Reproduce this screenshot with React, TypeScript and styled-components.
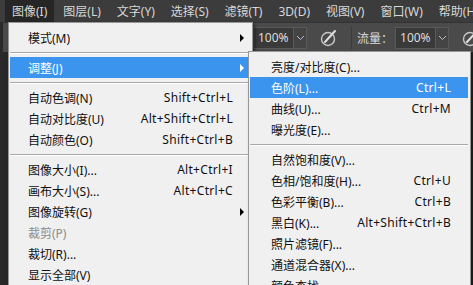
import styled, { createGlobalStyle } from 'styled-components';

const GlobalStyle = createGlobalStyle`
  html, body {
    margin: 0;
    padding: 0;
    background: #2b2b2b;
  }
  * {
    box-sizing: border-box;
  }
`;

const menuBarItems = ['图像(I)', '图层(L)', '文字(Y)', '选择(S)', '滤镜(T)', '3D(D)', '视图(V)', '窗口(W)', '帮助(H)'];

type Entry =
  | { sep: true }
  | { label: string; shortcut?: string; sub?: boolean; active?: boolean; disabled?: boolean; sep?: false };

const imageMenu: Entry[] = [
  { label: '模式(M)', sub: true },
  { sep: true },
  { label: '调整(J)', sub: true, active: true },
  { sep: true },
  { label: '自动色调(N)', shortcut: 'Shift+Ctrl+L' },
  { label: '自动对比度(U)', shortcut: 'Alt+Shift+Ctrl+L' },
  { label: '自动颜色(O)', shortcut: 'Shift+Ctrl+B' },
  { sep: true },
  { label: '图像大小(I)...', shortcut: 'Alt+Ctrl+I' },
  { label: '画布大小(S)...', shortcut: 'Alt+Ctrl+C' },
  { label: '图像旋转(G)', sub: true },
  { label: '裁剪(P)', disabled: true },
  { label: '裁切(R)...' },
  { label: '显示全部(V)' },
];

const adjustMenu: Entry[] = [
  { label: '亮度/对比度(C)...' },
  { label: '色阶(L)...', shortcut: 'Ctrl+L', active: true },
  { label: '曲线(U)...', shortcut: 'Ctrl+M' },
  { label: '曝光度(E)...' },
  { sep: true },
  { label: '自然饱和度(V)...' },
  { label: '色相/饱和度(H)...', shortcut: 'Ctrl+U' },
  { label: '色彩平衡(B)...', shortcut: 'Ctrl+B' },
  { label: '黑白(K)...', shortcut: 'Alt+Shift+Ctrl+B' },
  { label: '照片滤镜(F)...' },
  { label: '通道混合器(X)...' },
  { label: '颜色查找...' },
];

const Screen = styled.div`
  position: relative;
  width: 473px;
  height: 285px;
  overflow: hidden;
  background: #282828;
  font-family: 'Noto Sans', 'Noto Sans CJK SC', sans-serif;
  font-size: 12px;
`;

const MenuBar = styled.div`
  display: flex;
  height: 22px;
  padding-left: 5px;
  background: #3c3c3c;
  color: #d8d8d8;
`;

const BarItem = styled.div<{ $open?: boolean }>`
  display: flex;
  align-items: center;
  padding: 0 7px;
  margin-right: 2px;
  white-space: nowrap;
  background: ${(p) => (p.$open ? '#262626' : 'transparent')};
`;

const Body = styled.div`
  display: flex;
  height: 263px;
`;

const LeftStrip = styled.div`
  width: 8px;
  background: #3a3a3a;
  border-left: 3px solid #2a2a2a;
`;

const Main = styled.div`
  flex: 1;
  display: flex;
  flex-direction: column;
`;

const OptionsBar = styled.div`
  display: flex;
  align-items: center;
  height: 30px;
  padding-left: 250px;
  background: #4a4a4a;
  border-top: 1px solid #333;
  color: #dcdcdc;
  white-space: nowrap;
`;

const ValueBox = styled.div`
  display: flex;
  align-items: center;
  flex-shrink: 0;
  height: 22px;
  padding: 0 4px;
  background: #3a3a3a;
  border: 1px solid #5a5a5a;
  border-right: none;
  width: 40px;
`;

const ArrowBox = styled.div`
  display: flex;
  align-items: center;
  justify-content: center;
  flex-shrink: 0;
  width: 14px;
  height: 22px;
  border: 1px solid #5a5a5a;
  background: #444;
`;

const IconSlot = styled.div`
  display: flex;
  align-items: center;
  justify-content: center;
  flex-shrink: 0;
  width: 44px;
`;

const Divider = styled.div`
  flex-shrink: 0;
  width: 1px;
  height: 22px;
  background: #3a3a3a;
  margin-right: 5px;
`;

const OptLabel = styled.span`
  flex-shrink: 0;
  margin-right: 2px;
`;

const Canvas = styled.div`
  flex: 1;
  background: #282828;
`;

const Dropdown = styled.div<{ $left: number; $top: number; $width: number }>`
  position: absolute;
  left: ${(p) => p.$left}px;
  top: ${(p) => p.$top}px;
  width: ${(p) => p.$width}px;
  padding: 4px 2px 4px 1px;
  background: #f0f0f0;
  border: 1px solid #979797;
  box-shadow: 2px 2px 3px rgba(0, 0, 0, 0.45);
  color: #000;
`;

const Row = styled.div<{ $active?: boolean; $disabled?: boolean; $indent: number }>`
  display: grid;
  grid-template-columns: 1fr auto 17px;
  align-items: center;
  height: 21px;
  padding-left: ${(p) => p.$indent}px;
  white-space: nowrap;
  background: ${(p) => (p.$active ? '#3b95ef' : 'transparent')};
  color: ${(p) => (p.$active ? '#ffffff' : p.$disabled ? '#8c8c8c' : '#111')};
`;

const Shortcut = styled.span`
  text-align: right;
  letter-spacing: 0.3px;
`;

const Arrow = styled.span<{ $light?: boolean }>`
  justify-self: center;
  width: 0;
  height: 0;
  border-top: 4px solid transparent;
  border-bottom: 4px solid transparent;
  border-left: 4px solid ${(p) => (p.$light ? '#fff' : '#000')};
`;

const Separator = styled.div`
  height: 9px;
  display: flex;
  align-items: center;
  &::after {
    content: '';
    flex: 1;
    height: 1px;
    background: #a8a8a8;
    box-shadow: 0 1px 0 #ffffff;
  }
`;

const Menu = ({ items, indent }: { items: Entry[]; indent: number }) => (
  <>
    {items.map((it, i) =>
      it.sep ? (
        <Separator key={i} />
      ) : (
        <Row key={i} $active={it.active} $disabled={it.disabled} $indent={indent}>
          <span>{it.label}</span>
          <Shortcut>{it.shortcut ?? ''}</Shortcut>
          {it.sub ? <Arrow $light={it.active} /> : <span />}
        </Row>
      ),
    )}
  </>
);

const Chevron = () => (
  <svg width="9" height="6" viewBox="0 0 9 6">
    <path d="M1 1 L4.5 4.5 L8 1" fill="none" stroke="#bdbdbd" strokeWidth="1" />
  </svg>
);

const AirbrushIcon = () => (
  <svg width="20" height="20" viewBox="0 0 20 20">
    <circle cx="9" cy="11" r="6.5" fill="none" stroke="#c8c8c8" strokeWidth="1.4" />
    <path d="M6 14 L16 3" stroke="#e0e0e0" strokeWidth="2" strokeLinecap="round" />
  </svg>
);

export default function App() {
  return (
    <>
      <GlobalStyle />
      <Screen>
        <MenuBar>
          {menuBarItems.map((m, i) => (
            <BarItem key={m} $open={i === 0}>
              {m}
            </BarItem>
          ))}
        </MenuBar>
        <Body>
          <LeftStrip />
          <Main>
            <OptionsBar>
              <ValueBox>100%</ValueBox>
              <ArrowBox>
                <Chevron />
              </ArrowBox>
              <IconSlot>
                <AirbrushIcon />
              </IconSlot>
              <Divider />
              <OptLabel>流量：</OptLabel>
              <ValueBox>100%</ValueBox>
              <ArrowBox>
                <Chevron />
              </ArrowBox>
              <IconSlot>
                <AirbrushIcon />
              </IconSlot>
            </OptionsBar>
            <Canvas />
          </Main>
        </Body>
        <Dropdown $left={8} $top={22} $width={245}>
          <Menu items={imageMenu} indent={18} />
        </Dropdown>
        <Dropdown $left={248} $top={51} $width={223}>
          <Menu items={adjustMenu} indent={21} />
        </Dropdown>
      </Screen>
    </>
  );
}
